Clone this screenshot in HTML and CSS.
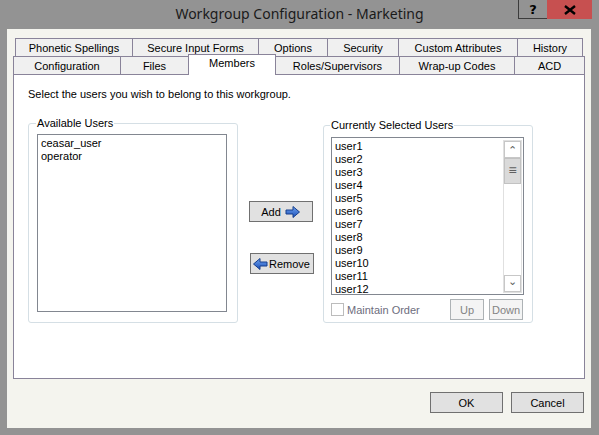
FILE: index.html
```html
<!DOCTYPE html>
<html lang="en">
  <head>
    <meta charset="UTF-8" />
    <title>Workgroup Configuration - Marketing</title>
    <link rel="stylesheet" href="styles.css">
  </head>
  <body>
    <div class="window">
      <div class="titlebar">
        <div class="title">Workgroup Configuration - Marketing</div>
        <div class="caption-btn help">?</div>
        <div class="caption-btn close">
          <svg width="12" height="10" viewBox="0 0 12 10">
            <path d="M1 1 L11 9 M11 1 L1 9" stroke="#000" stroke-width="2.4" />
          </svg>
        </div>
      </div>

      <div class="client">
        <div class="tabs">
          <div class="tab-row back">
            <div class="tab">Phonetic Spellings</div>
            <div class="tab">Secure Input Forms</div>
            <div class="tab">Options</div>
            <div class="tab">Security</div>
            <div class="tab">Custom Attributes</div>
            <div class="tab">History</div>
          </div>
          <div class="tab-row front">
            <div class="tab">Configuration</div>
            <div class="tab">Files</div>
            <div class="tab active">Members</div>
            <div class="tab">Roles/Supervisors</div>
            <div class="tab">Wrap-up Codes</div>
            <div class="tab">ACD</div>
          </div>
        </div>

        <div class="panel">
          <div class="hint">Select the users you wish to belong to this workgroup.</div>
          <div class="members">
            <fieldset class="group available">
              <legend>Available Users</legend>
              <div class="listbox">
                <div class="item">ceasar_user</div>
                <div class="item">operator</div>
              </div>
            </fieldset>

            <div class="middle">
              <button class="btn add">Add
                <svg width="15" height="12" viewBox="0 0 15 12">
                  <defs>
                    <linearGradient id="ga" x1="0" y1="0" x2="0" y2="1">
                      <stop offset="0" stop-color="#6fa3f0" />
                      <stop offset="1" stop-color="#1b4fb8" />
                    </linearGradient>
                  </defs>
                  <path d="M1 4 H8 V0.5 L14.5 6 L8 11.5 V8 H1 Z" fill="url(#ga)" stroke="#173f8c" stroke-width="1" stroke-linejoin="round" />
                </svg>
              </button>
              <button class="btn remove">
                <svg width="15" height="12" viewBox="0 0 15 12">
                  <defs>
                    <linearGradient id="gr" x1="0" y1="0" x2="0" y2="1">
                      <stop offset="0" stop-color="#6fa3f0" />
                      <stop offset="1" stop-color="#1b4fb8" />
                    </linearGradient>
                  </defs>
                  <path d="M14 4 H7 V0.5 L0.5 6 L7 11.5 V8 H14 Z" fill="url(#gr)" stroke="#173f8c" stroke-width="1" stroke-linejoin="round" />
                </svg>Remove</button>
            </div>

            <fieldset class="group selected">
              <legend>Currently Selected Users</legend>
              <div class="listbox scrolled">
                <div class="items">
                  <div class="item">user1</div>
                  <div class="item">user2</div>
                  <div class="item">user3</div>
                  <div class="item">user4</div>
                  <div class="item">user5</div>
                  <div class="item">user6</div>
                  <div class="item">user7</div>
                  <div class="item">user8</div>
                  <div class="item">user9</div>
                  <div class="item">user10</div>
                  <div class="item">user11</div>
                  <div class="item">user12</div>
                </div>
                <div class="scrollbar">
                  <div class="sb-btn">&#8963;</div>
                  <div class="sb-thumb">&#8801;</div>
                  <div class="sb-track"></div>
                  <div class="sb-btn down">&#8964;</div>
                </div>
              </div>
              <div class="order-row">
                <span class="checkbox"></span>
                <span class="order-label">Maintain Order</span>
                <button class="btn small" disabled>Up</button>
                <button class="btn small" disabled>Down</button>
              </div>
            </fieldset>
          </div>
        </div>

        <div class="footer">
          <button class="btn dialog">OK</button>
          <button class="btn dialog">Cancel</button>
        </div>
      </div>
    </div>
  </body>
</html>
```

FILE: styles.css
```css
body {
  margin: 0;
  background: #939393;
  font-family: "Liberation Sans", Arial, sans-serif;
  font-size: 11px;
  color: #000;
}

.window {
  width: 599px;
  height: 435px;
  overflow: hidden;
}

/* title bar */
.titlebar {
  height: 29px;
  display: flex;
}

.title {
  flex: 1;
  text-align: center;
  font-family: "Noto Sans", "Open Sans", sans-serif;
  font-size: 14px;
  line-height: 28px;
  color: #1a1a1a;
  padding-left: 81px;
}

.caption-btn {
  height: 19px;
  display: flex;
  align-items: center;
  justify-content: center;
  box-sizing: border-box;
}

.help {
  width: 29px;
  border: 1px solid #3c3c3c;
  border-top: none;
  border-right: none;
  font-weight: bold;
  font-size: 13px;
  font-family: "DejaVu Sans", sans-serif;
}

.close {
  width: 45px;
  background: #c75050;
  margin-right: 7px;
}

/* client area */
.client {
  margin: 0 8px 0 7px;
  height: 399px;
  background: #f4f4ee;
  padding: 9px 6px 0 6px;
  box-sizing: border-box;
}

.tabs {
  height: 36px;
}

.tab-row {
  display: flex;
}

.tab-row.back {
  padding: 0 2px;
  height: 18px;
}

.tab-row.front {
  height: 18px;
  align-items: flex-end;
}

.tab {
  box-sizing: border-box;
  height: 18px;
  border: 1px solid #898399;
  border-bottom: none;
  margin-right: -1px;
  background: #f0f0f0;
  text-align: center;
  line-height: 18px;
  white-space: nowrap;
}

.tab-row.back .tab:nth-child(1) { width: 118px; }
.tab-row.back .tab:nth-child(2) { width: 127px; }
.tab-row.back .tab:nth-child(3) { width: 70px; }
.tab-row.back .tab:nth-child(4) { width: 72px; }
.tab-row.back .tab:nth-child(5) { width: 120px; }
.tab-row.back .tab:nth-child(6) { width: 66px; }

.tab-row.front .tab:nth-child(1) { width: 108px; }
.tab-row.front .tab:nth-child(2) { width: 69px; }
.tab-row.front .tab:nth-child(3) { width: 88px; }
.tab-row.front .tab:nth-child(4) { width: 125px; }
.tab-row.front .tab:nth-child(5) { width: 116px; }
.tab-row.front .tab:nth-child(6) { width: 71px; }

.tab.active {
  height: 21px;
  background: #fff;
  line-height: 17px;
  margin-bottom: -1px;
  position: relative;
  z-index: 1;
}

.panel {
  height: 305px;
  box-sizing: border-box;
  background: #fff;
  border: 1px solid #898399;
  padding: 13px 0 0 14px;
}

.hint {
  line-height: 13px;
}

.members {
  display: flex;
  margin-top: 16px;
}

.group {
  margin: 0;
  border: 1px solid #d5dfe5;
  border-radius: 3px;
  box-sizing: border-box;
  width: 210px;
}

.group legend {
  padding: 0 1px;
  margin-left: -1px;
  line-height: 13px;
}

.available {
  height: 206px;
  padding: 4px 10px 0 8px;
}

.listbox {
  border: 1px solid #828790;
  background: #fff;
  box-sizing: border-box;
  padding: 2px 0 0 3px;
}

.available .listbox {
  height: 178px;
}

.item {
  line-height: 13px;
  height: 13px;
}

.middle {
  width: 85px;
  display: flex;
  flex-direction: column;
  align-items: center;
  padding-top: 84px;
  gap: 31px;
}

.btn {
  font: inherit;
  color: #000;
  background: #e1e1e1;
  border: 1px solid #707070;
  height: 21px;
  padding: 0;
  display: flex;
  align-items: center;
  justify-content: center;
  box-sizing: border-box;
}

.btn.add,
.btn.remove {
  width: 64px;
}

.btn.add svg {
  margin-left: 4px;
}

.btn.remove {
  margin-left: 2px;
}

.btn.remove svg {
  margin-right: 1px;
}

.selected {
  margin-top: 2px;
  height: 204px;
  padding: 5px 8px 0 7px;
}

.listbox.scrolled {
  height: 158px;
  display: flex;
  padding: 2px 1px 0 3px;
  overflow: hidden;
}

.items {
  flex: 1;
}

.scrollbar {
  width: 19px;
  box-sizing: border-box;
  border: 1px solid #e0e0e0;
  display: flex;
  flex-direction: column;
  margin-bottom: 1px;
}

.sb-btn {
  height: 17px;
  border: 1px solid #c7c7c7;
  box-sizing: border-box;
  font-size: 11px;
  line-height: 17px;
  text-align: center;
  color: #606060;
}

.sb-btn.down {
  line-height: 10px;
}

.sb-thumb {
  height: 26px;
  background: #dadada;
  border: 1px solid #c2c2c2;
  box-sizing: border-box;
  text-align: center;
  line-height: 22px;
  font-size: 14px;
  color: #606060;
}

.sb-track {
  flex: 1;
}

.order-row {
  display: flex;
  align-items: center;
  margin-top: 4px;
  padding-right: 1px;
  height: 21px;
}

.checkbox {
  width: 13px;
  height: 13px;
  box-sizing: border-box;
  border: 1px solid #bcbcbc;
  background: #fff;
}

.order-label {
  color: #6d6d7d;
  margin-left: 3px;
  flex: 1;
}

.btn.small {
  width: 34px;
  background: #f4f4f4;
  border-color: #adb2b5;
  color: #838383;
  margin-left: 5px;
}

.footer {
  display: flex;
  justify-content: flex-end;
  gap: 8px;
  padding: 13px 1px 0 0;
}

.btn.dialog {
  width: 73px;
}
```
